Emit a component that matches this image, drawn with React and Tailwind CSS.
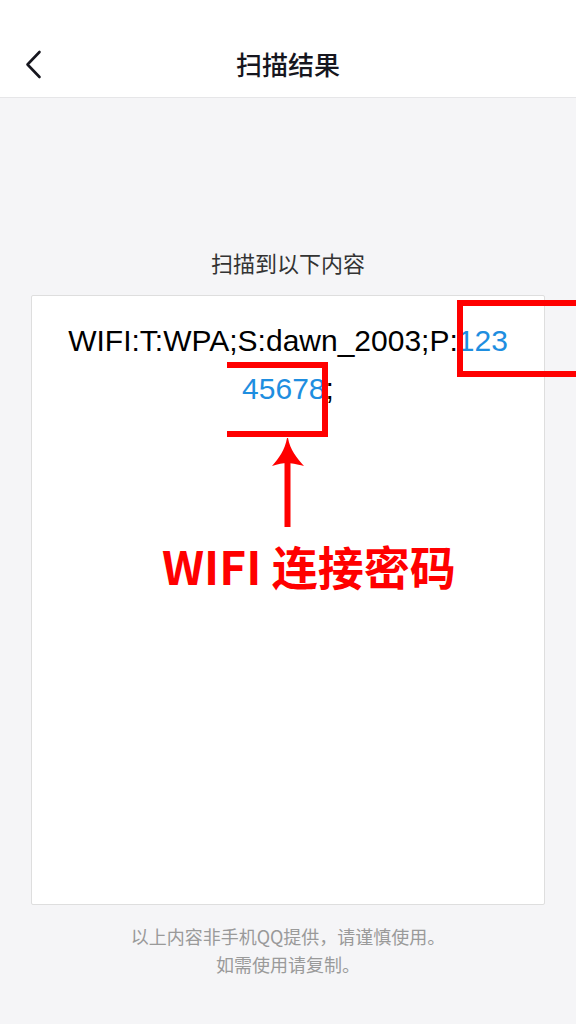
export default function App() {
  return (
    <div className="relative w-[576px] h-[1024px] overflow-hidden bg-[#f5f5f7] flex flex-col" style={{ fontFamily: '"Noto Sans CJK SC", "Noto Sans", sans-serif' }}>
      {/* Header */}
      <div className="h-[98px] shrink-0 bg-white border-b border-[#e6e6e8] flex items-end pb-[17px]">
        <div className="w-[80px] pl-[24px] flex items-center">
          <svg width="20" height="30" viewBox="0 0 20 30" fill="none">
            <path d="M15.5 2 L3.5 14.5 L15.5 27" stroke="#16161e" strokeWidth="2.6" strokeLinecap="round" strokeLinejoin="round" />
          </svg>
        </div>
        <div className="flex-1 text-center text-[26px] leading-[32px] text-[#16161e] font-medium">扫描结果</div>
        <div className="w-[80px]" />
      </div>

      {/* Subtitle */}
      <div className="mt-[149px] text-center text-[22px] leading-[30px] text-[#333]">扫描到以下内容</div>

      {/* Card */}
      <div className="mx-[31px] mt-[18px] h-[610px] shrink-0 bg-white border border-[#dedede] rounded-[2px] pt-[21px]" style={{ fontFamily: '"Liberation Sans", Arial, sans-serif' }}>
        <div className="text-center text-[30px] leading-[48px] text-black">
          <div>WIFI:T:WPA;S:dawn_2003;P:<span className="text-[#1e8ee0]">123</span></div>
          <div><span className="text-[#1e8ee0]">45678</span>;</div>
        </div>
      </div>

      {/* Footer */}
      <div className="mt-[17px] text-center text-[18px] leading-[28px] text-[#9a9a9a]">
        <div>以上内容非手机QQ提供，请谨慎使用。</div>
        <div>如需使用请复制。</div>
      </div>

      {/* Annotation overlays */}
      <div className="absolute left-[457px] top-[300px] w-[130px] h-[77px] border-[6px] border-r-0 border-[#ff0000]" />
      <div className="absolute left-[227px] top-[362px] w-[101px] h-[75px] border-[6px] border-l-0 border-[#ff0000]" />
      <svg className="absolute left-[270px] top-[436px]" width="36" height="94" viewBox="0 0 36 94">
        <path d="M17 2 C 15 14, 9 22, 2 30 C 8 28, 13 27, 17 27 C 21 27, 26 28, 34 30 C 27 22, 20 14, 18 2 Z" fill="#ff0000" />
        <rect x="14.5" y="20" width="6" height="71" fill="#ff0000" />
      </svg>
      <div className="absolute left-[162px] top-[537px] text-[46px] leading-[56px] font-bold text-[#ff0000] whitespace-nowrap">WIFI 连接密码</div>
    </div>
  );
}
